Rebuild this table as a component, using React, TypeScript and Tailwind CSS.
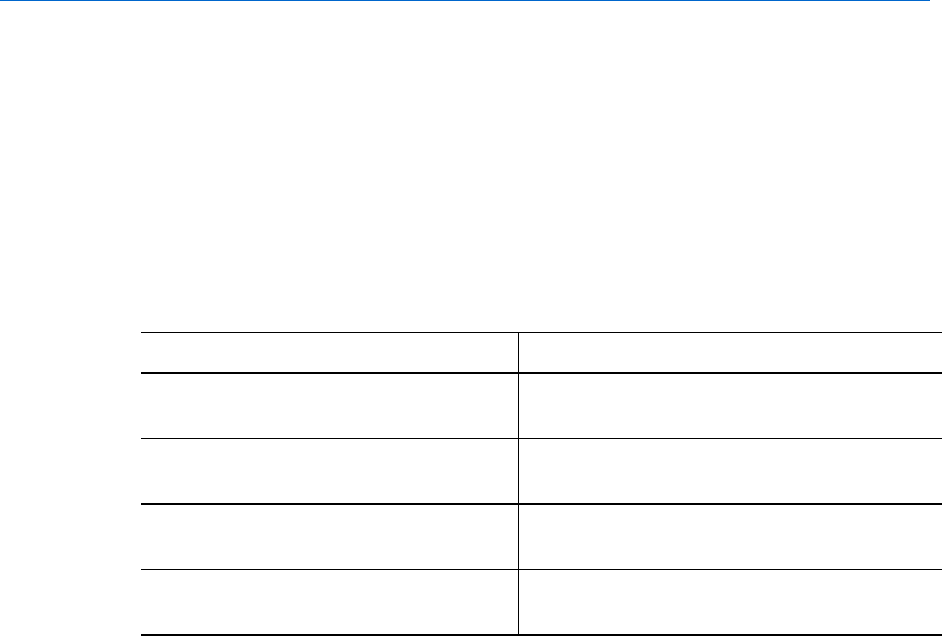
const rows = [
  { border: "border-b-2", h: "h-[66px]" },
  { border: "border-b", h: "h-[65px]" },
  { border: "border-b-2", h: "h-[66px]" },
  { border: "border-b", h: "h-[65px]" },
]

export default function App() {
  return (
    <div className="h-[636px] w-[942px] overflow-hidden bg-white font-['Liberation_Sans',Arial,sans-serif] text-black">
      <div className="h-px w-[930px] bg-[#0066cc]" />

      <div className="pl-[141px] pt-[331px]">
        <div className="flex h-[42px] w-[801px] border-t border-b-2 border-black">
          <div className="w-[378px] border-r border-black" />
          <div className="flex-1" />
        </div>

        {[rows[1], rows[2], rows[3], rows[0]].map((r, i) => (
          <div
            key={i}
            className={`flex w-[801px] border-black ${r.border} ${r.h}`}
          >
            <div className="w-[378px] border-r border-black" />
            <div className="flex-1" />
          </div>
        ))}
      </div>
    </div>
  )
}
